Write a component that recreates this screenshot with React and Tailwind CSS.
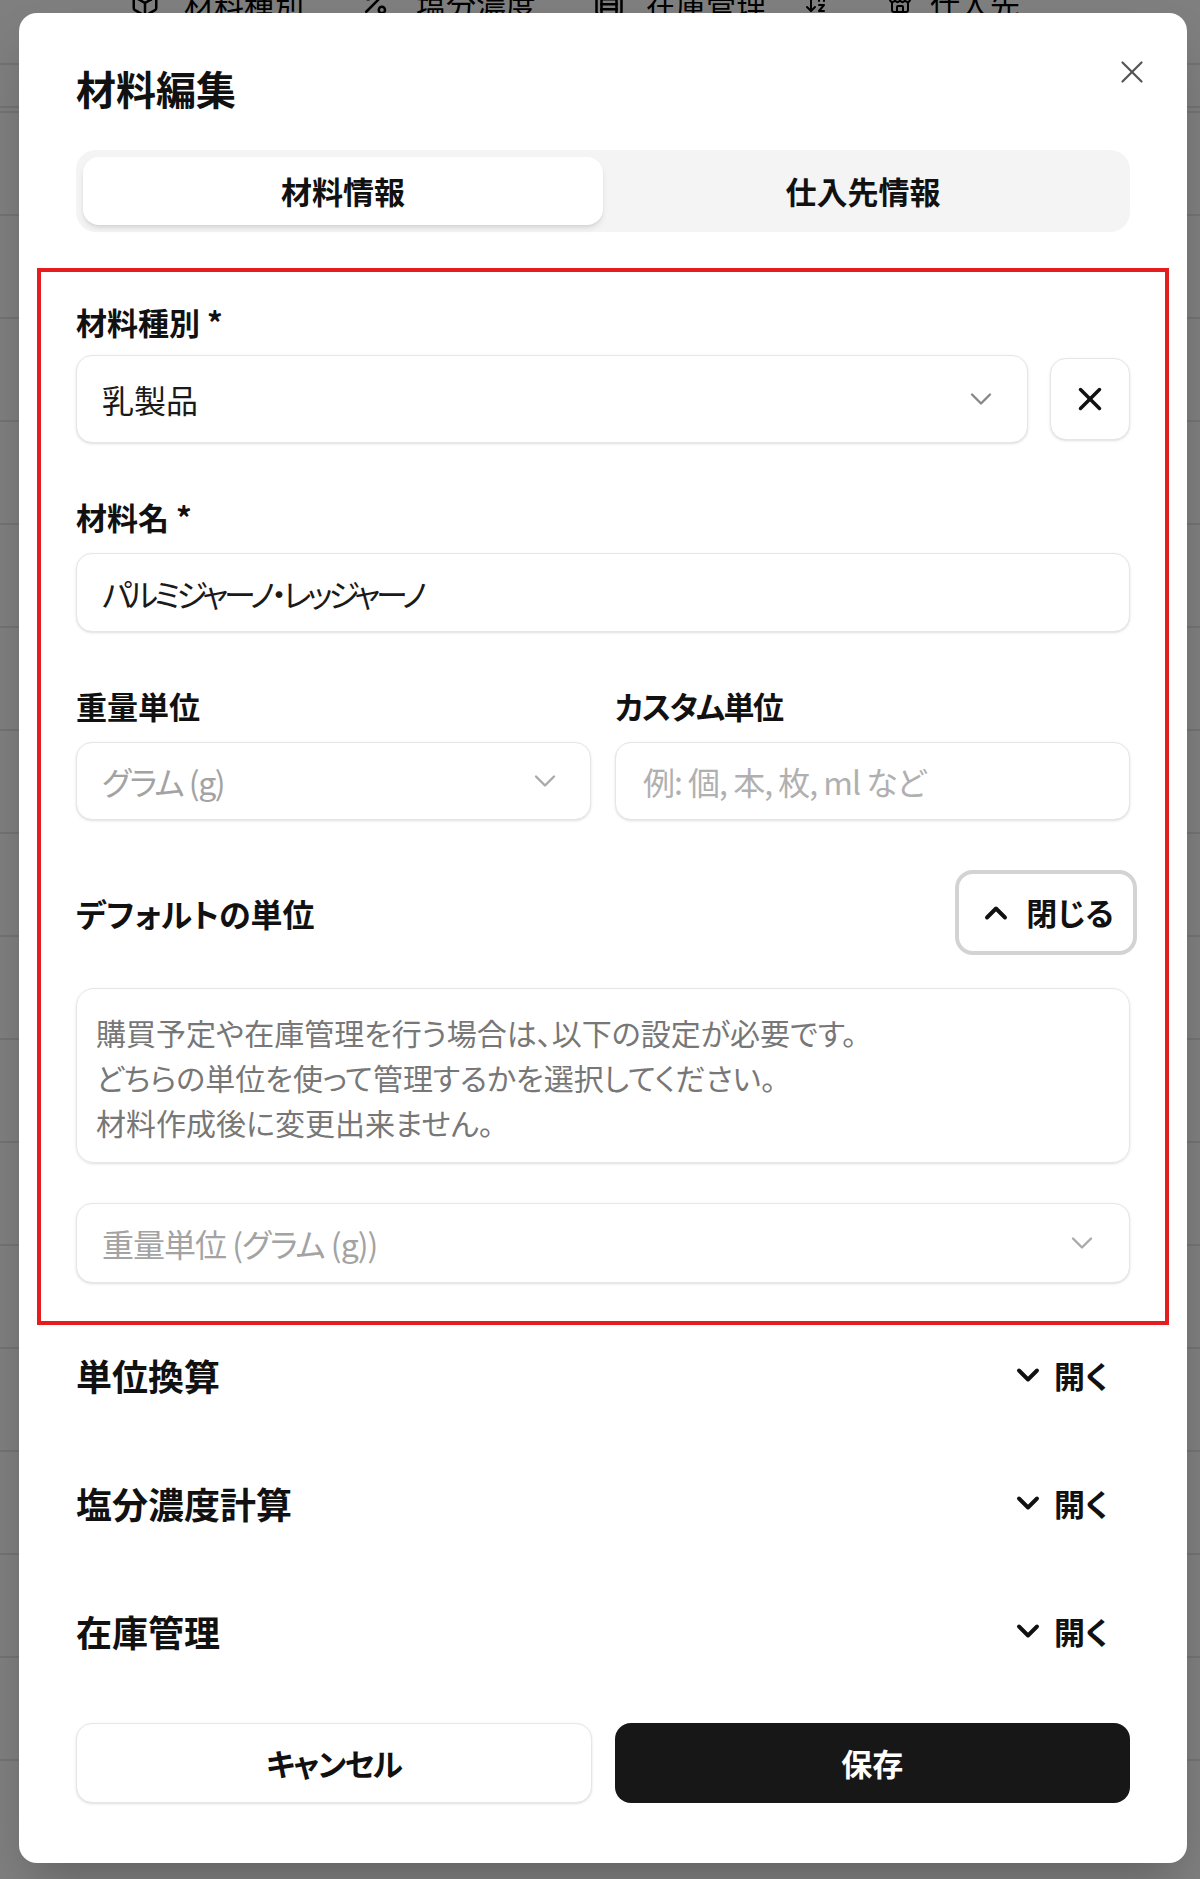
import React from "react";
import { X, ChevronDown, ChevronUp, Package, Percent, Warehouse, ArrowDownAZ, Store } from "lucide-react";

const font = "font-['Noto_Sans_CJK_JP','Noto_Sans',sans-serif] [font-feature-settings:'palt']";

function Background() {
  const rows = Array.from({ length: 17 });
  return (
    <div className="w-[1200px] h-[1879px] bg-white overflow-hidden">
      <div className="flex items-center h-[77px] -mt-[12px] border-b-2 border-gray-200 text-[30px] text-black">
        <div className="flex items-center self-start h-[30px]">
          <Package className="ml-[130px] w-[30px] h-[30px]" strokeWidth={2} />
          <span className="ml-[24px]">材料種別</span>
          <Percent className="ml-[56px] w-[30px] h-[30px]" strokeWidth={2} />
          <span className="ml-[26px]">塩分濃度</span>
          <Warehouse className="ml-[58px] w-[30px] h-[30px]" strokeWidth={2} />
          <span className="ml-[22px]">在庫管理</span>
          <ArrowDownAZ className="ml-[38px] w-[24px] h-[30px]" strokeWidth={2} />
          <Store className="ml-[60px] w-[24px] h-[30px]" strokeWidth={2} />
          <span className="ml-[18px]">仕入先</span>
        </div>
      </div>
      <div className="h-[43px] border-b-2 border-gray-200" />
      <div className="mt-[3px]">
        {rows.map((_, i) => (
          <div key={i} className="h-[103px] border-t-2 border-gray-200" />
        ))}
      </div>
    </div>
  );
}

function Field({ children, className = "" }) {
  return (
    <div className={"flex items-center rounded-[16px] border border-[#e6e6e6] bg-white shadow-sm " + className}>
      {children}
    </div>
  );
}

function SectionRow({ title, className = "" }) {
  return (
    <div className={"flex items-center justify-between h-[40px] " + className}>
      <span className="text-[36px] leading-[40px] font-semibold text-[#111]">{title}</span>
      <div className="flex items-center gap-[8px] pr-[22px]">
        <ChevronDown className="w-[36px] h-[36px] text-[#111]" strokeWidth={2.6} />
        <span className="text-[31px] font-semibold text-[#111]">開く</span>
      </div>
    </div>
  );
}

export default function App() {
  return (
    <div className={"relative w-[1200px] h-[1879px] overflow-hidden " + font}>
      <Background />
      <div className="absolute inset-0 bg-black/50" />
      <div className="absolute left-[19px] top-[13px] w-[1168px] h-[1850px] bg-white rounded-[18px] shadow-2xl px-[57px] pt-[51px] flex flex-col">
        <button className="absolute right-[36px] top-[40px] w-[38px] h-[38px] text-[#555]">
          <X className="w-[38px] h-[38px]" strokeWidth={1.4} />
        </button>
        <h2 className="text-[40px] leading-[48px] font-semibold text-[#111]">材料編集</h2>

        <div className="mt-[38px] h-[82px] rounded-[20px] bg-[#f4f4f5] p-[7px] grid grid-cols-2">
          <div className="flex items-center justify-center rounded-[16px] bg-white shadow-md text-[31px] font-semibold text-[#111]">
            材料情報
          </div>
          <div className="flex items-center justify-center text-[31px] font-semibold text-[#111]">
            仕入先情報
          </div>
        </div>

        <div className="mt-[36px] -mx-[39px] border-4 border-[#e41e1e] px-[35px] pt-[30px] pb-[38px]">
          <div className="text-[31px] leading-[40px] font-semibold text-[#111]">材料種別 *</div>
          <div className="mt-[13px] flex items-center gap-[22px]">
            <Field className="flex-1 h-[88px] pl-[25px] pr-[28px] justify-between">
              <span className="text-[32px] text-[#1a1a1a]">乳製品</span>
              <ChevronDown className="w-[36px] h-[36px] text-[#888]" strokeWidth={1.6} />
            </Field>
            <Field className="w-[80px] h-[82px] justify-center">
              <X className="w-[38px] h-[38px] text-[#111]" strokeWidth={2.2} />
            </Field>
          </div>

          <div className="mt-[54px] text-[31px] leading-[40px] font-semibold text-[#111]">材料名 *</div>
          <Field className="mt-[16px] h-[79px] pl-[25px]">
            <span className="text-[32px] tracking-[-4px] text-[#1a1a1a]">パルミジャーノ・レッジャーノ</span>
          </Field>

          <div className="mt-[54px] grid grid-cols-2 gap-[24px]">
            <div>
              <div className="text-[31px] leading-[40px] font-semibold text-[#111]">重量単位</div>
              <Field className="mt-[16px] h-[78px] pl-[25px] pr-[27px] justify-between">
                <span className="text-[32px] tracking-[-1.5px] text-[#a3a3a3]">グラム (g)</span>
                <ChevronDown className="w-[36px] h-[36px] text-[#aaa]" strokeWidth={1.6} />
              </Field>
            </div>
            <div>
              <div className="text-[31px] leading-[40px] font-semibold tracking-[-1.5px] text-[#111]">カスタム単位</div>
              <Field className="mt-[16px] h-[78px] pl-[27px]">
                <span className="text-[32px] tracking-[-1px] text-[#b0b0b0]">例: 個, 本, 枚, ml など</span>
              </Field>
            </div>
          </div>

          <div className="mt-[50px] flex items-center justify-between h-[85px]">
            <span className="text-[32px] font-bold text-[#111]">デフォルトの単位</span>
            <button className="-mr-[7px] w-[182px] h-[85px] rounded-[18px] border-[4px] border-[#d3d3d3] bg-white flex items-center justify-center gap-[12px]">
              <ChevronUp className="w-[36px] h-[36px] text-[#111]" strokeWidth={2.6} />
              <span className="text-[31px] font-semibold text-[#111]">閉じる</span>
            </button>
          </div>

          <div className="mt-[33px] h-[175px] rounded-[18px] border border-[#e6e6e6] pl-[19px] pt-[21px] shadow-sm">
            <p className="text-[30px] leading-[45px] text-[#777]">
              購買予定や在庫管理を行う場合は、以下の設定が必要です。
              <br />
              どちらの単位を使って管理するかを選択してください。
              <br />
              材料作成後に変更出来ません。
            </p>
          </div>

          <Field className="mt-[40px] h-[80px] pl-[25px] pr-[29px] justify-between">
            <span className="text-[32px] tracking-[-1px] text-[#a3a3a3]">重量単位 (グラム (g))</span>
            <ChevronDown className="w-[36px] h-[36px] text-[#aaa]" strokeWidth={1.6} />
          </Field>
        </div>

        <SectionRow title="単位換算" className="mt-[30px]" />
        <SectionRow title="塩分濃度計算" className="mt-[88px]" />
        <SectionRow title="在庫管理" className="mt-[88px]" />

        <div className="mt-[72px] grid grid-cols-2 gap-[23px]">
          <button className="h-[80px] rounded-[16px] border border-[#e6e6e6] bg-white shadow-sm text-[31px] font-semibold tracking-[-1.5px] text-[#111]">
            キャンセル
          </button>
          <button className="h-[80px] rounded-[16px] bg-[#171717] text-[31px] font-semibold text-white">
            保存
          </button>
        </div>
      </div>
    </div>
  );
}
